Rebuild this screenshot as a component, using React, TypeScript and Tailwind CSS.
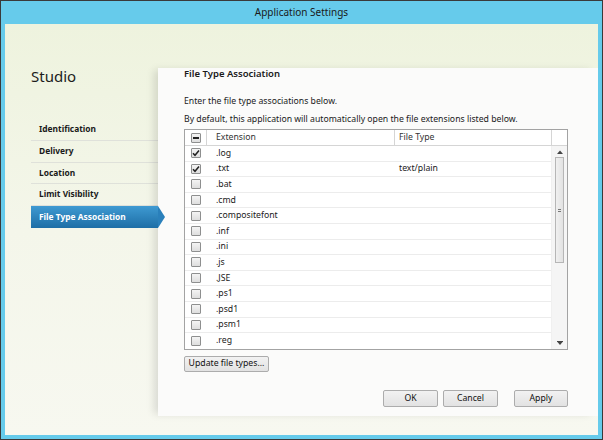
import React from "react"

const navItems = ["Identification", "Delivery", "Location", "Limit Visibility", "File Type Association"]

const rows = [
  { ext: ".log", type: "", checked: true },
  { ext: ".txt", type: "text/plain", checked: true },
  { ext: ".bat", type: "", checked: false },
  { ext: ".cmd", type: "", checked: false },
  { ext: ".compositefont", type: "", checked: false },
  { ext: ".inf", type: "", checked: false },
  { ext: ".ini", type: "", checked: false },
  { ext: ".js", type: "", checked: false },
  { ext: ".JSE", type: "", checked: false },
  { ext: ".ps1", type: "", checked: false },
  { ext: ".psd1", type: "", checked: false },
  { ext: ".psm1", type: "", checked: false },
  { ext: ".reg", type: "", checked: false },
]

function Check({ state }: { state: "on" | "off" | "mixed" }) {
  return (
    <div className="flex h-[10px] w-[10px] items-center justify-center rounded-[1px] border border-[#8e8f8f] bg-gradient-to-b from-[#f4f4f4] to-[#dedede]">
      {state === "on" && (
        <svg width="8" height="8" viewBox="0 0 8 8">
          <path d="M1 4.2 L3 6.3 L7 1.5" fill="none" stroke="#222" strokeWidth="1.5" />
        </svg>
      )}
      {state === "mixed" && <div className="h-[2px] w-[6px] bg-[#222]" />}
    </div>
  )
}

function Button({ label, className }: { label: string; className: string }) {
  return (
    <div
      className={
        "flex items-center justify-center rounded-[2px] border border-[#acacac] bg-gradient-to-b from-[#f2f2f2] to-[#e2e2e2] text-[8.7px] text-[#111] " +
        className
      }
    >
      {label}
    </div>
  )
}

export default function App() {
  return (
    <div
      className="flex h-[440px] w-[603px] flex-col border border-[#3a3a3a] bg-[#66cbeb]"
      style={{ fontFamily: '"Noto Sans", "Open Sans", sans-serif' }}
    >
      <div className="flex h-[23px] items-center justify-center text-[10px] text-[#1a1a1a]">
        Application Settings
      </div>
      <div className="mx-[4px] mb-[4px] flex flex-1 bg-gradient-to-b from-[#eef3de] via-[#f4f6ea] to-[#f7f8f0]">
        <div className="w-[153px] shrink-0 pl-[26px]">
          <div className="mt-[42px] text-[15px] leading-[20px] text-[#1c1c1c]">Studio</div>
          <div className="mt-[33px]">
            {navItems.map((item, i) => {
              const selected = i === navItems.length - 1
              if (selected) {
                return (
                  <div key={item} className="relative flex h-[22px] items-center bg-gradient-to-b from-[#3e9ad2] to-[#1d6ea6] pl-[8px] text-[8.4px] font-bold text-white">
                    {item}
                    <div className="absolute right-[-7px] top-0 h-0 w-0 border-y-[11px] border-l-[7px] border-y-transparent border-l-[#2a80bb]" />
                  </div>
                )
              }
              return (
                <div key={item} className="flex h-[21.8px] items-center border-b border-[#dfe1da] pl-[8px] text-[8.4px] font-bold text-[#1a1a1a]">
                  {item}
                </div>
              )
            })}
          </div>
        </div>
        <div className="mb-[19px] mt-[44px] flex flex-1 flex-col bg-[#fbfbfa] pl-[26px] shadow-[-6px_0_8px_-2px_rgba(0,0,0,0.12)]">
          <div className="text-[9.5px] font-semibold leading-[12px] text-[#1a1a1a]">File Type Association</div>
          <div className="mt-[15px] text-[8.7px] leading-[12px] text-[#1a1a1a]">Enter the file type associations below.</div>
          <div className="mt-[6px] text-[8.7px] leading-[12px] text-[#1a1a1a]">
            By default, this application will automatically open the file extensions listed below.
          </div>
          <div className="mt-[4px] w-[384px] border border-[#a3a3a3] bg-white text-[8.7px] text-[#1a1a1a]">
            <div className="flex h-[16px] border-b border-[#d5d5d5]">
              <div className="flex w-[22px] items-center justify-center border-r border-[#d5d5d5]">
                <Check state="mixed" />
              </div>
              <div className="flex w-[188px] items-center border-r border-[#d5d5d5] pl-[9px] text-[#333]">Extension</div>
              <div className="flex w-[157px] items-center border-r border-[#d5d5d5] pl-[4px] text-[#333]">File Type</div>
              <div className="flex-1" />
            </div>
            <div className="flex">
              <div className="w-[366px]">
                {rows.map((r) => (
                  <div key={r.ext} className="flex h-[15.6px] items-center border-b border-[#ececec] last:border-b-0">
                    <div className="flex w-[22px] justify-center">
                      <Check state={r.checked ? "on" : "off"} />
                    </div>
                    <div className="w-[188px] pl-[9px]">{r.ext}</div>
                    <div className="pl-[4px]">{r.type}</div>
                  </div>
                ))}
              </div>
              <div className="flex w-[16px] flex-col items-center border-l border-[#f0f0f0] bg-[#f5f5f5]">
                <svg className="mt-[4px]" width="6" height="5" viewBox="0 0 6 5">
                  <path d="M0 4 L3 0.5 L6 4 Z" fill="#444" />
                </svg>
                <div className="mt-[2px] flex h-[106px] w-[9px] items-center justify-center border border-[#b6b6b6] bg-gradient-to-r from-[#f0f0f0] to-[#e2e2e2]">
                  <div className="flex flex-col gap-[1px]">
                    <div className="h-px w-[3px] bg-[#777]" />
                    <div className="h-px w-[3px] bg-[#777]" />
                  </div>
                </div>
                <div className="flex-1" />
                <svg className="mb-[3px]" width="6" height="5" viewBox="0 0 6 5">
                  <path d="M0 0.5 L6 0.5 L3 4 Z" fill="#444" />
                  <rect x="0" y="0" width="6" height="1" fill="#444" />
                </svg>
              </div>
            </div>
          </div>
          <Button label="Update file types..." className="mt-[6px] h-[16px] w-[85px]" />
          <div className="mt-[18px] flex w-[384px] justify-end">
            <Button label="OK" className="h-[17px] w-[55px]" />
            <Button label="Cancel" className="ml-[5px] h-[17px] w-[55px]" />
            <Button label="Apply" className="ml-[16px] h-[17px] w-[54px]" />
          </div>
        </div>
      </div>
    </div>
  )
}
